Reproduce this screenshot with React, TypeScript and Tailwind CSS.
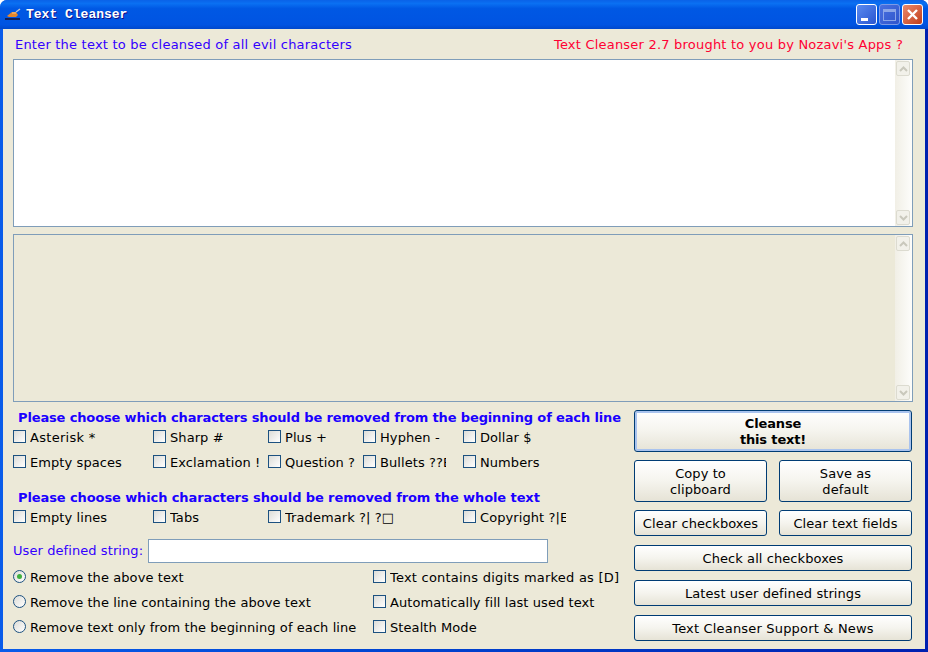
import React from "react";

const font = "font-['DejaVu_Sans',sans-serif]";

const Check = ({ label, w }: { label: string; w?: string }) => (
  <div className="flex items-center h-[13px]">
    <span className="w-[13px] h-[13px] shrink-0 border border-[#1c5180] bg-gradient-to-br from-[#dcdcd7] to-white" />
    <span className={"ml-1 mt-[2px] whitespace-nowrap overflow-hidden leading-[16px] " + (w ?? "")}>{label}</span>
  </div>
);

const Radio = ({ label, on }: { label: string; on?: boolean }) => (
  <div className="flex items-center h-[13px]">
    <span className="w-[13px] h-[13px] shrink-0 rounded-full border border-[#1c5180] bg-gradient-to-br from-[#dcdcd7] to-white flex items-center justify-center">
      {on && <span className="w-[5px] h-[5px] rounded-full bg-[#3fb03f]" />}
    </span>
    <span className="ml-1 mt-[2px] whitespace-nowrap leading-[16px]">{label}</span>
  </div>
);

const Btn = ({ children, cls }: { children: React.ReactNode; cls: string }) => (
  <button className={"rounded-[3px] border border-[#003c74] pt-[2px] bg-gradient-to-b from-white via-[#f5f4ee] to-[#e6e3d6] text-center leading-[16px] text-[#000] " + cls}>
    {children}
  </button>
);

const Arrow = ({ up }: { up?: boolean }) => (
  <div className="w-[14px] h-[15px] rounded-[2px] border border-[#dcdbd0] bg-[#f2f1ea] flex items-center justify-center">
    <svg width="9" height="6" viewBox="0 0 9 6">
      <path d={up ? "M1 5 L4.5 1.5 L8 5" : "M1 1 L4.5 4.5 L8 1"} fill="none" stroke="#c9c8bc" strokeWidth="2" />
    </svg>
  </div>
);

const TextBox = ({ bg }: { bg: string }) => (
  <div className={"h-[168px] border border-[#7f9db9] flex justify-end " + bg}>
    <div className="w-[17px] py-[1px] pl-[1px] flex flex-col justify-between bg-gradient-to-r from-[#f1efe6] to-[#fdfdfb]">
      <Arrow up />
      <Arrow />
    </div>
  </div>
);

const WinBtn = ({ cls, children }: { cls: string; children: React.ReactNode }) => (
  <div className={"w-[21px] h-[21px] rounded-[3px] border flex items-center justify-center " + cls}>
    {children}
  </div>
);

export default function App() {
  return (
    <div className={"w-[928px] h-[652px] flex flex-col overflow-hidden rounded-t-[7px] bg-gradient-to-r from-[#0a5cea] to-[#0020b0] text-[13px] text-black " + font}>
      {/* Title bar */}
      <div className="h-[29px] shrink-0 flex items-center pl-[5px] pr-[5px] bg-[linear-gradient(to_bottom,#0a62e8_0%,#0a70f2_12%,#0058e4_30%,#0054e2_85%,#0048cc_100%)]">
        <svg width="16" height="13" viewBox="0 0 16 13">
          <path d="M2 8 L7 4 L11 4 L13 7 L11 9 L4 9 Z" fill="#e8872a" />
          <path d="M7 5 L11 5" stroke="#f6c88a" strokeWidth="1" />
          <path d="M11 4 L15 1" stroke="#b8c0d0" strokeWidth="1.5" />
          <path d="M0 10 H15 V12 H0 Z" fill="#10205a" />
        </svg>
        <span className="ml-[5px] font-['Liberation_Mono',monospace] font-bold text-[13px] text-white [text-shadow:1px_1px_0_#0f1089]">
          Text Cleanser
        </span>
        <div className="ml-auto flex gap-[2px]">
          <WinBtn cls="border-white bg-gradient-to-br from-[#5a8af0] to-[#2a55d0]">
            <span className="w-[7px] h-[3px] bg-white mt-[9px] mr-[5px]" />
          </WinBtn>
          <WinBtn cls="border-[#7d9ae6] bg-gradient-to-br from-[#4a70e0] to-[#2f55cc]">
            <span className="w-[13px] h-[12px] border border-[#8ba5e8] border-t-[3px]" />
          </WinBtn>
          <WinBtn cls="border-white bg-gradient-to-br from-[#e8886a] to-[#c23c16]">
            <svg width="13" height="13" viewBox="0 0 13 13">
              <path d="M2 2 L11 11 M11 2 L2 11" stroke="white" strokeWidth="2.4" />
            </svg>
          </WinBtn>
        </div>
      </div>

      {/* Client area */}
      <div className="flex-1 mx-[3px] mb-[3px] bg-[#ece9d8] pl-[10px] pr-[12px] flex flex-col">
        <div className="h-[30px] shrink-0 flex justify-between items-center pl-[2px] pr-[10px] pt-[1px] tracking-[0.21px]">
          <span className="text-[#3300ff]">Enter the text to be cleansed of all evil characters</span>
          <span className="text-[#ff0033]">Text Cleanser 2.7 brought to you by Nozavi's Apps ?</span>
        </div>
        <TextBox bg="bg-white" />
        <div className="h-[7px] shrink-0" />
        <TextBox bg="bg-[#ece9d8]" />

        <div className="flex mt-[8px]">
          {/* Options */}
          <div className="w-[621px] shrink-0 flex flex-col tracking-[0.08px]">
            <div className="pl-[5px] h-[15px] leading-[15px] font-bold text-[#1a00ff] whitespace-nowrap tracking-[-0.14px]">
              Please choose which characters should be removed from the beginning of each line
            </div>
            <div className="mt-[5px] grid grid-cols-[140px_115px_95px_100px_1fr] auto-rows-[13px] gap-y-[12px]">
              <Check label="Asterisk *" w="tracking-[0.3px]" />
              <Check label="Sharp #" />
              <Check label="Plus +" />
              <Check label="Hyphen -" />
              <Check label="Dollar $" />
              <Check label="Empty spaces" />
              <Check label="Exclamation !" />
              <Check label="Question ?" />
              <Check label="Bullets ??E" w="w-[66px]" />
              <Check label="Numbers" />
            </div>
            <div className="mt-[22px] pl-[5px] h-[15px] leading-[15px] font-bold text-[#1a00ff] tracking-[-0.1px]">
              Please choose which characters should be removed from the whole text
            </div>
            <div className="mt-[5px] grid grid-cols-[140px_115px_195px_1fr] auto-rows-[13px]">
              <Check label="Empty lines" />
              <Check label="Tabs" />
              <Check label="Trademark ?| ?□" />
              <Check label="Copyright ?|E" w="w-[86px]" />
            </div>
            <div className="mt-[16px] h-[24px] flex items-center">
              <span className="w-[135px] text-[#3300ff] whitespace-nowrap">User defined string:</span>
              <div className="w-[400px] h-[24px] bg-white border border-[#7f9db9]" />
            </div>
            <div className="mt-[7px] flex">
              <div className="w-[360px] flex flex-col gap-y-[12px]">
                <Radio label="Remove the above text" on />
                <Radio label="Remove the line containing the above text" />
                <Radio label="Remove text only from the beginning of each line" />
              </div>
              <div className="flex flex-col gap-y-[12px]">
                <Check label="Text contains digits marked as [D]" w="tracking-[0.22px]" />
                <Check label="Automatically fill last used text" />
                <Check label="Stealth Mode" />
              </div>
            </div>
          </div>

          {/* Buttons */}
          <div className="w-[278px] flex flex-col tracking-[0.08px]">
            <Btn cls="h-[42px] font-bold tracking-[-0.15px] shadow-[inset_0_0_0_2px_#a9c3ee]">
              Cleanse
              <br />
              this text!
            </Btn>
            <div className="mt-[8px] flex justify-between">
              <Btn cls="w-[133px] h-[42px]">
                Copy to
                <br />
                clipboard
              </Btn>
              <Btn cls="w-[133px] h-[42px]">
                Save as
                <br />
                default
              </Btn>
            </div>
            <div className="mt-[8px] flex justify-between">
              <Btn cls="w-[133px] h-[26px]">Clear checkboxes</Btn>
              <Btn cls="w-[133px] h-[26px]">Clear text fields</Btn>
            </div>
            <Btn cls="mt-[9px] h-[26px]">Check all checkboxes</Btn>
            <Btn cls="mt-[9px] h-[26px]">Latest user defined strings</Btn>
            <Btn cls="mt-[9px] h-[26px] tracking-[0.18px]">Text Cleanser Support &amp; News</Btn>
          </div>
        </div>
      </div>
    </div>
  );
}
